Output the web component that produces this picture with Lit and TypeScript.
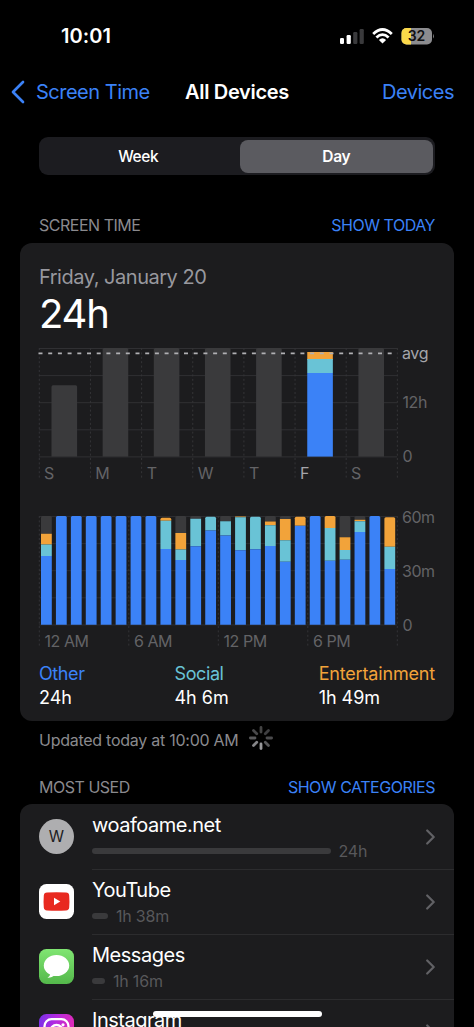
import { LitElement, html, svg, css, nothing } from "lit";
import { customElement, property } from "lit/decorators.js";

const OTHER = "#3b82f7";
const SOCIAL = "#69c3d6";
const FUN = "#f2a33a";
const IDLE = "#3a3a3c";

type Day = { label: string; total: number; x: number; on?: boolean };

// Bar tops are in chart units: 0 is the top grid line, 108.5 the baseline.
const DAYS: Day[] = [
  { label: "S", total: 37.2, x: 5 },
  { label: "M", total: 0, x: 56.2 },
  { label: "T", total: 0, x: 107.8 },
  { label: "W", total: 0, x: 158.8 },
  { label: "T", total: 0, x: 210 },
  { label: "F", total: 4, x: 261, on: true },
  { label: "S", total: 0, x: 312 },
];

// Each hour: [idle, entertainment, social, other] segment tops; null = none.
const B: (number | null)[] = [null, null, null, 0];
const HOURS: (number | null)[][] = [
  [0, 17.7, 28.6, 40],
  B, B, B, B, B, B, B,
  [null, 1.7, 4.8, 33],
  [0, 17, 33.5, 44],
  [0, null, 2.8, 30.3],
  [null, null, 0.8, 14.6],
  [0, null, 5.3, 19.6],
  [null, 0.4, 1.3, 34.3],
  [null, null, 0.7, 33.2],
  [0, 5.6, 9.3, 30],
  [0, 3, 24.2, 45.7],
  [null, 0.8, null, 9.7],
  B,
  [null, 0, 12, 44.7],
  [0, 21.3, 34, 43.8],
  [0, 3.8, 5.3, 16],
  B,
  [null, 1.2, 30.8, 53],
];

@customElement("week-chart")
class WeekChart extends LitElement {
  static styles = css`
    :host { display: block; height: 140px; }
    svg { display: block; overflow: visible; }
    text { font: 400 16px Inter, sans-serif; letter-spacing: -0.4px; fill: #636366; }
    .on { fill: #a5a5aa; }
  `;
  render() {
    return html`<svg width="396" height="140" viewBox="0 0 396 140">
      ${[0, 1, 2, 3, 4].map((i) => svg`<path d="M0 ${0.5 + i * 27.1}H358" stroke="#303033" />`)}
      ${[0, 1, 2, 3, 4, 5, 6, 7].map(
        (i) => svg`<path d="M${0.3 + i * 51.15} 0V132" stroke="#343437" stroke-dasharray="2 2.4" />`
      )}
      ${DAYS.map((d, i) => {
        const x = 12.5 + i * 51.15;
        return d.on
          ? svg`<rect x=${x} y="4" width="25.6" height="8" fill=${FUN} />
              <rect x=${x} y="11" width="25.6" height="14" fill=${SOCIAL} />
              <rect x=${x} y="25" width="25.6" height="83.6" fill=${OTHER} />`
          : svg`<path fill=${IDLE} d="M${x} 108.6V${d.total + 1.5}q0 -1.5 1.5 -1.5h22.6q1.5 0 1.5 1.5V108.6z" />`;
      })}
      <path d="M-0.5 5.3H358" stroke="#b0b0b3" stroke-width="1.7" stroke-dasharray="4 5.7" />
      ${DAYS.map((d) => svg`<text class=${d.on ? "on" : ""} x=${d.x} y="130.8">${d.label}</text>`)}
      <text class="on" x="363" y="11">avg</text>
      <text x="363.5" y="60">12h</text>
      <text x="363.5" y="114">0</text>
    </svg>`;
  }
}

@customElement("day-chart")
class DayChart extends LitElement {
  static styles = css`
    :host { display: block; height: 140px; }
    svg { display: block; overflow: visible; }
    text { font: 400 16px Inter, sans-serif; letter-spacing: -0.45px; fill: #636366; }
  `;
  render() {
    const fills = [IDLE, FUN, SOCIAL, OTHER];
    return html`<svg width="396" height="140" viewBox="0 0 396 140">
      ${[0, 1, 2, 3, 4].map((i) => svg`<path d="M0 ${0.5 + i * 27.1}H358" stroke="#2d2d31" />`)}
      ${[0, 1, 2, 3, 4].map(
        (i) => svg`<path d="M${0.3 + i * 89.5} 0V132" stroke="#343437" stroke-dasharray="2 2.4" />`
      )}
      ${HOURS.map((segs, h) => {
        const x = 2 + h * 14.93;
        const first = segs.findIndex((v) => v !== null);
        return segs.map((top, k) => {
          if (top === null) return nothing;
          const next = segs.slice(k + 1).find((v) => v !== null);
          const end = next ?? 108.8;
          const r = k === first && end - top > 2 ? 1.5 : 0;
          return svg`<path fill=${fills[k]} d="M${x} ${end}V${top + r}q0 ${-r} ${r} ${-r}h${10.8 - 2 * r}q${r} 0 ${r} ${r}V${end}z" />`;
        });
      })}
      <text x="5.5" y="131">12 AM</text>
      <text x="95" y="131">6 AM</text>
      <text x="184.5" y="131">12 PM</text>
      <text x="274" y="131">6 PM</text>
      <text x="363" y="6.6">60m</text>
      <text x="363" y="60.5">30m</text>
      <text x="363.5" y="114.5">0</text>
    </svg>`;
  }
}

@customElement("usage-row")
class UsageRow extends LitElement {
  @property() name = "";
  @property() time = "";
  @property({ type: Number }) bar = 0;
  @property({ type: Boolean }) first = false;
  static styles = css`
    :host { display: flex; height: 65.2px; padding-left: 19px; box-sizing: border-box; }
    .icon { width: 35px; height: 35px; margin-top: 15px; margin-right: 18px; flex: none; }
    .body { flex: 1; display: flex; align-items: center; padding-right: 19.5px; border-top: 1px solid #2c2c2e; box-sizing: border-box; }
    .first { border-top-color: transparent; }
    .info { flex: 1; height: 64px; }
    .name { font-size: 20px; letter-spacing: -0.48px; line-height: 26px; padding-top: 7px; color: #fff; white-space: nowrap; }
    .meter { display: flex; align-items: center; gap: 8px; height: 26px; font-size: 16px; letter-spacing: -0.2px; color: #58585b; }
    .bar { height: 6px; border-radius: 3px; background: #3a3a3c; }
    svg { display: block; }
  `;
  render() {
    return html`<div class="icon"><slot></slot></div>
      <div class="body ${this.first ? "first" : ""}">
        <div class="info">
          <div class="name">${this.name}</div>
          <div class="meter"><div class="bar" style="width:${this.bar}px"></div><span>${this.time}</span></div>
        </div>
        <svg width="9" height="16" viewBox="0 0 9 16" fill="none" stroke="#616165" stroke-width="2.2" stroke-linecap="round" stroke-linejoin="round"><path d="M1.2 1.5 7.7 8 1.2 14.5" /></svg>
      </div>`;
  }
}

@customElement("app-root")
class AppRoot extends LitElement {
  static styles = css`
    :host { display: block; height: 1027px; overflow: hidden; position: relative; background: #000; color: #fff; font-family: Inter, sans-serif; font-size: 20px; }
    svg { display: block; }
    .status { display: flex; align-items: center; height: 71px; padding: 0 40px 0 61px; box-sizing: border-box; justify-content: space-between; }
    .clock { font-weight: 600; font-size: 20px; letter-spacing: 0.1px; }
    .nav { display: grid; grid-template-columns: 1fr auto 1fr; align-items: center; height: 41px; padding: 0 20px; letter-spacing: -0.5px; }
    .back { display: flex; align-items: center; gap: 11px; color: #3b82f7; margin-left: -9px; }
    .title { font-weight: 600; letter-spacing: -0.33px; }
    .right { text-align: right; color: #3b82f7; }
    .seg { display: flex; margin: 25px 39px 0; height: 38px; padding: 2.5px 2px; box-sizing: border-box; border-radius: 9px; background: #1c1c20; font-size: 15.5px; font-weight: 500; letter-spacing: -0.4px; }
    .seg div { flex: 1; display: flex; align-items: center; justify-content: center; border-radius: 8px; padding-right: 4px; }
    .seg .sel { flex: none; width: 193.5px; padding: 0; background: #5b5b60; font-weight: 600; }
    .head { display: flex; justify-content: space-between; padding: 0 39px; font-size: 16px; line-height: 20px; letter-spacing: -0.48px; color: #8a8a8e; }
    .link { color: #3b82f7; }
    .h1 { margin-top: 40px; }
    .h2 { margin-top: 24px; }
    .card { margin: 7.500px 20px 0; background: #1c1c1e; border-radius: 12px; }
    .stats { padding: 0 19px; height: 478px; box-sizing: border-box; }
    .date { color: #98989e; line-height: 24px; padding-top: 22.500px; letter-spacing: -0.47px; }
    .total { font-size: 40px; line-height: 50px; letter-spacing: -1.2px; }
    .week { padding-top: 9px; }
    .day { padding-top: 28px; }
    .legend { display: flex; justify-content: space-between; font-size: 18px; line-height: 24px; padding-top: 5.500px; letter-spacing: -0.02px; }
    .legend .o, .legend .s { letter-spacing: -0.4px; }
    .legend .e { letter-spacing: -0.17px; }
    .o { color: #3b82f7; } .s { color: #69c3d6; } .e { color: #f2a33a; }
    .updated { display: flex; align-items: center; gap: 9px; height: 26px; padding: 6px 39px 0; font-size: 16px; letter-spacing: -0.26px; color: #8a8a8e; }
    .spin { margin-top: -4px; }
    .list { overflow: hidden; border-radius: 12px 12px 0 0; height: 240px; margin-top: 7px; }
    .home { position: absolute; left: 153px; top: 1011px; width: 169px; height: 6px; border-radius: 3px; background: #fff; }
  `;
  render() {
    const spokes = ["#444", "#3e3e40", "#4b4b4d", "#58585a", "#98989b", "#858588", "#59595b", "#48484a"];
    return html`
      <div class="status">
        <span class="clock">10:01</span>
        <svg width="95" height="20" viewBox="0 0 95 20">
          <g fill="#fff"><rect x="1" y="12" width="4" height="6" rx="1.2" /><rect x="7.6" y="9" width="4.2" height="9" rx="1.2" /></g>
          <g fill="#3a3a3c"><rect x="14.2" y="6" width="4.2" height="12" rx="1.2" /><rect x="20.6" y="3" width="4.2" height="15" rx="1.2" /></g>
          <g fill="none" stroke="#fff" stroke-width="2.8"><path d="M34.2 8.1Q43.5 -0.9 52.8 8.1" /><path d="M37.4 11.5Q43.5 5.7 49.6 11.5" /></g>
          <path fill="#fff" d="M43.5 17.6 39.9 13.9Q43.5 10.7 47.1 13.9z" />
          <clipPath id="cell"><rect x="62.5" y="2" width="30.5" height="16.5" rx="5" /></clipPath>
          <g clip-path="url(#cell)"><rect x="62" y="2" width="32" height="17" fill="#8c8c8f" /><rect x="62" y="2" width="10" height="17" fill="#fbd949" /></g>
          <path d="M94 7.8q1.6 2.4 0 4.8z" fill="#8c8c8f" />
          <text x="77.5" y="15.3" text-anchor="middle" font-family="Inter, sans-serif" font-weight="600" font-size="14" fill="#111">32</text>
        </svg>
      </div>
      <div class="nav">
        <div class="back">
          <svg width="14" height="24" viewBox="0 0 14 24" fill="none" stroke="#3b82f7" stroke-width="2.7" stroke-linecap="round" stroke-linejoin="round"><path d="M12 2 2 12 12 22" /></svg>
          <span>Screen Time</span>
        </div>
        <div class="title">All Devices</div>
        <div class="right">Devices</div>
      </div>
      <div class="seg"><div>Week</div><div class="sel">Day</div></div>
      <div class="head h1"><span>SCREEN TIME</span><span class="link">SHOW TODAY</span></div>
      <div class="card stats">
        <div class="date">Friday, January 20</div>
        <div class="total">24h</div>
        <week-chart class="week"></week-chart>
        <day-chart class="day"></day-chart>
        <div class="legend">
          <div><div class="o">Other</div><div>24h</div></div>
          <div><div class="s">Social</div><div>4h 6m</div></div>
          <div><div class="e">Entertainment</div><div>1h 49m</div></div>
        </div>
      </div>
      <div class="updated">
        <span>Updated today at 10:00 AM</span>
        <svg class="spin" width="26" height="26" viewBox="-13 -13 26 26" stroke-width="2.8" stroke-linecap="round">
          ${spokes.map((c, i) => svg`<path d="M0 -6V-10.6" stroke=${c} transform="rotate(${i * 45})" />`)}
        </svg>
      </div>
      <div class="head h2"><span>MOST USED</span><span class="link">SHOW CATEGORIES</span></div>
      <div class="card list">
        <usage-row name="woafoame.net" time="24h" bar="238.5" first>
          <svg width="35" height="35" viewBox="0 0 35 35"><circle cx="17.5" cy="17.5" r="17.5" fill="#aeaeb0" /><text x="17.5" y="23" text-anchor="middle" font-family="Inter, sans-serif" font-size="15.5" fill="#1c1c1e">W</text></svg>
        </usage-row>
        <usage-row name="YouTube" time="1h 38m" bar="16">
          <svg width="35" height="35" viewBox="0 0 35 35"><rect width="35" height="35" rx="7.5" fill="#fff" /><path fill="#e8291f" d="M8 8.6Q17.5 7.7 27 8.6Q30 8.8 30.2 11.5Q30.7 17.5 30.2 23.5Q30 26.2 27 26.4Q17.5 27.3 8 26.4Q5 26.2 4.8 23.5Q4.3 17.5 4.8 11.5Q5 8.8 8 8.6z" /><path fill="#fff" d="M15 13.7v7.6l6.3-3.8z" /></svg>
        </usage-row>
        <usage-row name="Messages" time="1h 16m" bar="13">
          <svg width="35" height="35" viewBox="0 0 35 35"><defs><linearGradient id="g" x2="0" y2="1"><stop stop-color="#80e572" /><stop offset="1" stop-color="#54b84b" /></linearGradient></defs><rect width="35" height="35" rx="7.5" fill="url(#g)" /><ellipse cx="17.5" cy="16.5" rx="12.7" ry="10.6" fill="#fff" /><path fill="#fff" d="M11.5 24q-.3 3.2-3 4.7 4.5.2 7.5-3.2z" /></svg>
        </usage-row>
        <usage-row name="Instagram" time="" bar="0">
          <svg width="35" height="35" viewBox="0 0 35 35"><defs><linearGradient id="i" x2="1" y2=".25"><stop stop-color="#7530e8" /><stop offset=".5" stop-color="#b52be0" /><stop offset="1" stop-color="#e02ab8" /></linearGradient></defs><rect width="35" height="35" rx="7.5" fill="url(#i)" /><g fill="none" stroke="#fff" stroke-width="2.3"><rect x="5.5" y="5.2" width="24" height="24" rx="7" /><circle cx="17.5" cy="17.2" r="6.2" /></g><circle cx="24" cy="10.800" r="1.600" fill="#fff" /></svg>
        </usage-row>
      </div>
      <div class="home"></div>`;
  }
}
